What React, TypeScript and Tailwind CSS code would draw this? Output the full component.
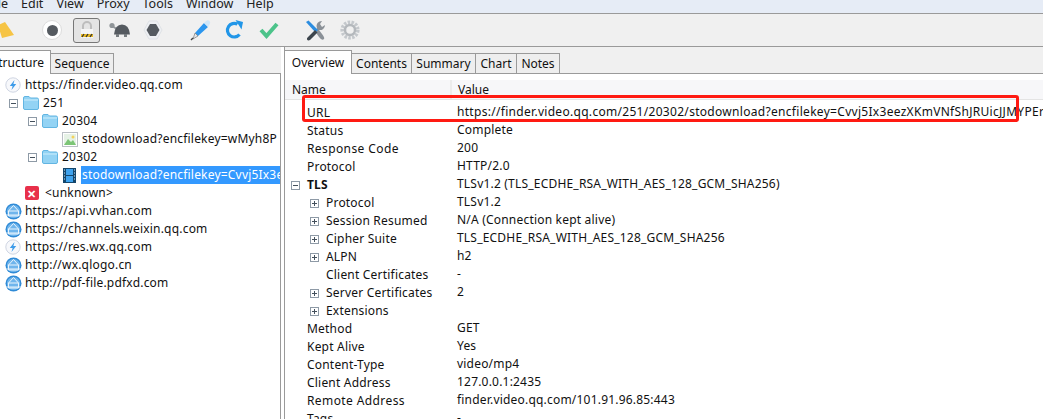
const font = "font-['Noto_Sans','Liberation_Sans',sans-serif]";

const Expander = ({ open }: { open?: boolean }) => (
    <span className="flex items-center justify-center size-[9px] border border-[#8e9aa6] bg-white shrink-0">
        <span className="relative block w-[5px] h-px bg-[#44505c]">
            {!open && <span className="absolute left-[2px] -top-[2px] w-px h-[5px] bg-[#44505c]" />}
        </span>
    </span>
);

const Folder = () => (
    <svg width="16" height="14" viewBox="0 0 16 14" className="shrink-0">
        <path d="M0.5 2 Q0.5 0.5 2 0.5 H6 L7.5 2 H14 Q15.5 2 15.5 3.5 V12 Q15.5 13.5 14 13.5 H2 Q0.5 13.5 0.5 12 Z" fill="#93d3f4" stroke="#62b5e2" />
        <path d="M1 4 H15" stroke="#cdeefc" />
    </svg>
);

const Bolt = () => (
    <svg width="16" height="16" viewBox="0 0 16 16" className="shrink-0">
        <circle cx="8" cy="8" r="7.2" fill="#f7f8fb" stroke="#cfd5e2" />
        <path d="M9.5 3 L4.8 9 H7.6 L6.5 13 L11.2 7 H8.4 Z" fill="#3d9be9" />
    </svg>
);

const Globe = () => (
    <svg width="17" height="17" viewBox="0 0 17 17" className="shrink-0">
        <circle cx="8.5" cy="8.5" r="8" fill="#2f8ad6" />
        <circle cx="8.5" cy="8.5" r="6.6" fill="#6fb5ec" />
        <path d="M8.5 2.5 L3.5 8 V13 H13.5 V8 Z M3.5 8 H13.5 M1 12 H16" fill="none" stroke="#eaf5fd" strokeWidth="1" />
    </svg>
);

const Row = ({ indent, icon, children, expander }: { indent: number; icon?: React.ReactNode; children: React.ReactNode; expander?: boolean }) => (
    <div className="flex items-center h-[18px] whitespace-nowrap overflow-hidden" style={{ paddingLeft: indent }}>
        {expander && <span className="mr-[5px]"><Expander open /></span>}
        {icon}
        {children}
    </div>
);

const Tree = () => (
    <div className="flex-1 pt-[2px] text-[#111] overflow-hidden tracking-[0.2px]">
        <Row indent={5} icon={<Bolt />}><span className="ml-[4px]">https://finder.video.qq.com</span></Row>
        <Row indent={9} expander icon={<Folder />}><span className="ml-[4px]">251</span></Row>
        <Row indent={28} expander icon={<Folder />}><span className="ml-[4px]">20304</span></Row>
        <Row indent={62} icon={
            <svg width="16" height="15" viewBox="0 0 16 15" className="shrink-0">
                <rect x="0.5" y="0.5" width="15" height="14" fill="#fff" stroke="#b9bfc4" />
                <rect x="2" y="2" width="12" height="11" fill="#e6f2e6" />
                <path d="M2 13 L6 7 L9 10 L11 8 L14 13 Z" fill="#7cc576" />
                <circle cx="11" cy="5" r="1.5" fill="#f4d35e" />
            </svg>
        }><span className="ml-[4px]">stodownload?encfilekey=wMyh8P</span></Row>
        <Row indent={28} expander icon={<Folder />}><span className="ml-[4px]">20302</span></Row>
        <Row indent={63} icon={
            <svg width="13" height="15" viewBox="0 0 13 15" className="shrink-0">
                <rect width="13" height="15" fill="#14466b" />
                <rect x="3" y="1" width="7" height="6" fill="#3fa3ee" />
                <rect x="3" y="8" width="7" height="6" fill="#3fa3ee" />
                <path d="M1 2h1M1 5h1M1 8h1M1 11h1M11 2h1M11 5h1M11 8h1M11 11h1" stroke="#cfe8fa" />
            </svg>
        }><span className="ml-[5px] flex-1 min-w-0 bg-[#3399ff] text-white h-[18px] leading-[18px] px-px overflow-hidden">stodownload?encfilekey=Cvvj5Ix3eezXKm</span></Row>
        <Row indent={25} icon={
            <span className="flex items-center justify-center size-[14px] rounded-[2px] bg-[#e8304a] text-white text-[11px] font-bold leading-none">✕</span>
        }><span className="ml-[6px]">&lt;unknown&gt;</span></Row>
        <Row indent={5} icon={<Globe />}><span className="ml-[3px]">https://api.vvhan.com</span></Row>
        <Row indent={5} icon={<Globe />}><span className="ml-[3px]">https://channels.weixin.qq.com</span></Row>
        <Row indent={5} icon={<Bolt />}><span className="ml-[4px]">https://res.wx.qq.com</span></Row>
        <Row indent={5} icon={<Globe />}><span className="ml-[3px]">http://wx.qlogo.cn</span></Row>
        <Row indent={5} icon={<Globe />}><span className="ml-[3px]">http://pdf-file.pdfxd.com</span></Row>
    </div>
);

const rows: { name: string; value: string; level?: number; exp?: "open" | "closed"; bold?: boolean; wide?: boolean; url?: boolean }[] = [
    { name: "URL", value: "https://finder.video.qq.com/251/20302/stodownload?encfilekey=Cvvj5Ix3eezXKmVNfShJRUicJJMYPEr", url: true },
    { name: "Status", value: "Complete" },
    { name: "Response Code", value: "200", wide: true },
    { name: "Protocol", value: "HTTP/2.0" },
    { name: "TLS", value: "TLSv1.2 (TLS_ECDHE_RSA_WITH_AES_128_GCM_SHA256)", exp: "open", bold: true },
    { name: "Protocol", value: "TLSv1.2", level: 1, exp: "closed" },
    { name: "Session Resumed", value: "N/A (Connection kept alive)", level: 1, exp: "closed" },
    { name: "Cipher Suite", value: "TLS_ECDHE_RSA_WITH_AES_128_GCM_SHA256", level: 1, exp: "closed" },
    { name: "ALPN", value: "h2", level: 1, exp: "closed" },
    { name: "Client Certificates", value: "-", level: 1 },
    { name: "Server Certificates", value: "2", level: 1, exp: "closed" },
    { name: "Extensions", value: "", level: 1, exp: "closed" },
    { name: "Method", value: "GET" },
    { name: "Kept Alive", value: "Yes" },
    { name: "Content-Type", value: "video/mp4" },
    { name: "Client Address", value: "127.0.0.1:2435" },
    { name: "Remote Address", value: "finder.video.qq.com/101.91.96.85:443", wide: true },
    { name: "Tags", value: "-" },
];

const tabs = [
    { label: "Contents", w: "w-[60px]" },
    { label: "Summary", w: "w-[64px]" },
    { label: "Chart", w: "w-[41px]" },
    { label: "Notes", w: "w-[43px]" },
];

const Overview = () => (
    <div className="relative flex-1 overflow-hidden pt-[6px]">
        <div className="flex h-[20px] bg-[#f7f7f9] border-b border-[#e4e4e4] text-[#111]">
            <span className="w-[167px] pl-[7px] leading-[20px] border-r-2 border-[#ececec]">Name</span>
            <span className="pl-[6px] leading-[20px]">Value</span>
        </div>
        <div className="pt-[4px] text-[#111] tracking-[0.2px]">
            {rows.map((r, i) => (
                <div key={i} className="flex h-[18px] whitespace-nowrap">
                    <div className="relative w-[172px] shrink-0 leading-[18px]" style={{ paddingLeft: r.level ? 41 : 22 }}>
                        {r.exp && (
                            <span className={r.level ? "absolute left-[25px] top-[5px]" : "absolute left-[6px] top-[5px]"}>
                                <Expander open={r.exp === "open"} />
                            </span>
                        )}
                        <span className={r.bold ? "font-bold" : r.wide ? "tracking-[0.4px]" : ""}>{r.name}</span>
                    </div>
                    <span className={r.url ? "leading-[16px] tracking-[0.3px]" : "leading-[16px]"}>{r.value}</span>
                </div>
            ))}
        </div>
        {/* red annotation */}
        <div className="absolute left-[17px] top-[21px] w-[717px] h-[27px] border-[3px] border-[#ff1a12] rounded-[3px]" />
    </div>
);

export default function App() {
    return (
        <div className={`h-[419px] w-[1043px] overflow-hidden bg-white flex flex-col text-[12px] ${font}`}>
            <div className="h-[14px] bg-[#e6ecf6] border-b border-[#9a9a9a] flex items-end gap-[13px] text-[#222] leading-[19px] overflow-hidden text-[12.5px]">
                <span className="-ml-[12px]">File</span>
                <span>Edit</span>
                <span>View</span>
                <span>Proxy</span>
                <span>Tools</span>
                <span>Window</span>
                <span>Help</span>
            </div>
            <div className="h-[33px] bg-[#f0f0f0] border-b border-[#9a9a9a] flex items-center">
                <svg width="14" height="16" viewBox="0 0 14 16">
                    <path d="M-2 3 L5 0 L14 13 L2 16 Z" fill="#f6c445" />
                </svg>
                <div className="ml-[28px] flex items-center justify-center size-[20px] rounded-full bg-white border border-[#dcdcdc]">
                    <span className="size-[11px] rounded-full bg-[#555a60]" />
                </div>
                <div className="ml-[11px] flex items-center justify-center w-[27px] h-[25px] rounded-[3px] border border-[#777] bg-[#e4e4e4]">
                    <svg width="16" height="18" viewBox="0 0 16 18">
                        <path d="M4 8 V5 a4 4 0 0 1 8 0 V8" fill="none" stroke="#bdbdbd" strokeWidth="2" />
                        <rect x="2" y="8" width="12" height="9" fill="#f5f5f5" />
                        <rect x="2" y="13" width="12" height="3" fill="#e8b923" />
                        <path d="M3 16 L5 13 M7 16 L9 13 M11 16 L13 13" stroke="#333" strokeWidth="1.3" />
                    </svg>
                </div>
                <svg width="21" height="16" viewBox="0 0 21 16" className="ml-[9px]">
                    <circle cx="3" cy="3.5" r="2.6" fill="#8f9498" />
                    <path d="M4.5 5 L8 7" stroke="#8f9498" strokeWidth="2" />
                    <path d="M5 12.5 Q6 2.5 13 2.5 Q20 2.5 21 12.5 Z" fill="#555a60" />
                    <path d="M7 12 h3 v3 h-3 Z M15 12 h3 v3 h-3 Z" fill="#777c80" />
                </svg>
                <svg width="20" height="20" viewBox="0 0 20 20" className="ml-[13px]">
                    <path d="M6 1 H14 L19 10 L14 19 H6 L1 10 Z" fill="#eef0f3" stroke="#dfe2e6" />
                    <path d="M7 4 H13 L16.5 10 L13 16 H7 L3.5 10 Z" fill="#555a60" />
                </svg>
                <svg width="21" height="22" viewBox="0 0 21 22" className="ml-[27px]">
                    <path d="M5 14 L14 4 L18 8 L8 17 Z" fill="#2b96ee" />
                    <path d="M14 4 L16 2 Q18 0.5 19.5 2 Q21 3.5 19.5 5.5 L18 8 Z" fill="#cfe6f8" />
                    <path d="M5 14 L8 17 L3 20 Z" fill="#e4e6e9" stroke="#666" strokeWidth="0.6" />
                    <path d="M1 21 L3 19" stroke="#444" strokeWidth="1.5" />
                </svg>
                <svg width="19" height="20" viewBox="0 0 19 20" className="ml-[14px]">
                    <path d="M14.5 14.5 A6.8 6.8 0 1 1 12.5 4.2" fill="none" stroke="#2196e8" strokeWidth="3.2" />
                    <path d="M10.5 0 L18 2 L16.5 9.5 Z" fill="#2196e8" />
                </svg>
                <svg width="20" height="18" viewBox="0 0 20 18" className="ml-[15px]">
                    <path d="M2 9 L7.5 15 L18 3" fill="none" stroke="#4cc38a" strokeWidth="4" />
                </svg>
                <svg width="21" height="21" viewBox="0 0 21 21" className="ml-[26px]">
                    <path d="M20 5 A5 5 0 0 1 14 10 L17 14 Q20 18 19 19 Q17 21 14 17 L10.5 12 L12 8 A5 5 0 0 1 17 1 L15 4 L17 7 Z" fill="#8a9097" />
                    <path d="M1 2 L3.5 0.5 L13 10 L10.5 12.5 Z" fill="#2c8de0" />
                    <path d="M10 10 L12.5 12.5 L5 20 Q3 21 2 19.5 Q1.5 18 3 17 Z" fill="#3d454d" />
                </svg>
                <svg width="20" height="20" viewBox="0 0 20 20" className="ml-[14px]">
                    <circle cx="10" cy="10" r="7.8" fill="none" stroke="#c4c8cc" strokeWidth="3.6" strokeDasharray="2.5 1.3" />
                    <circle cx="10" cy="10" r="5" fill="none" stroke="#b4b8bc" strokeWidth="2.5" />
                </svg>
            </div>
            <div className="flex flex-1 min-h-0 bg-[#f0f0f0]">
                <div className="w-[281px] flex flex-col pt-[3px]">
                    <div className="flex items-end h-[24px] border-b border-[#9a9a9a] text-[#111]">
                        <div className="flex justify-end w-[51px] h-[24px] -mb-px bg-white border border-l-0 border-b-0 border-[#9a9a9a] leading-[23px] pr-[6px] overflow-hidden whitespace-nowrap">Structure</div>
                        <div className="w-[63px] h-[20px] bg-[#eeeeee] border border-l-0 border-b-0 border-[#9a9a9a] leading-[20px] text-center">Sequence</div>
                    </div>
                    <div className="flex-1 flex flex-col bg-white border-r border-[#9a9a9a] min-h-0">
                        <Tree />
                    </div>
                </div>
                <div className="w-[4px] bg-white border-r border-[#9a9a9a]" />
                <div className="flex-1 flex flex-col pt-[3px] min-w-0">
                    <div className="flex items-end h-[24px] border-b border-[#9a9a9a] text-[#111]">
                        <div className="w-[67px] h-[24px] -mb-px bg-white border border-l-0 border-b-0 border-[#9a9a9a] leading-[23px] text-center">Overview</div>
                        {tabs.map(t => (
                            <div key={t.label} className={`${t.w} h-[20px] bg-[#eeeeee] border border-l-0 border-b-0 border-[#9a9a9a] leading-[20px] text-center`}>{t.label}</div>
                        ))}
                    </div>
                    <div className="flex-1 bg-white flex flex-col min-h-0">
                        <Overview />
                    </div>
                </div>
            </div>
        </div>
    );
}
